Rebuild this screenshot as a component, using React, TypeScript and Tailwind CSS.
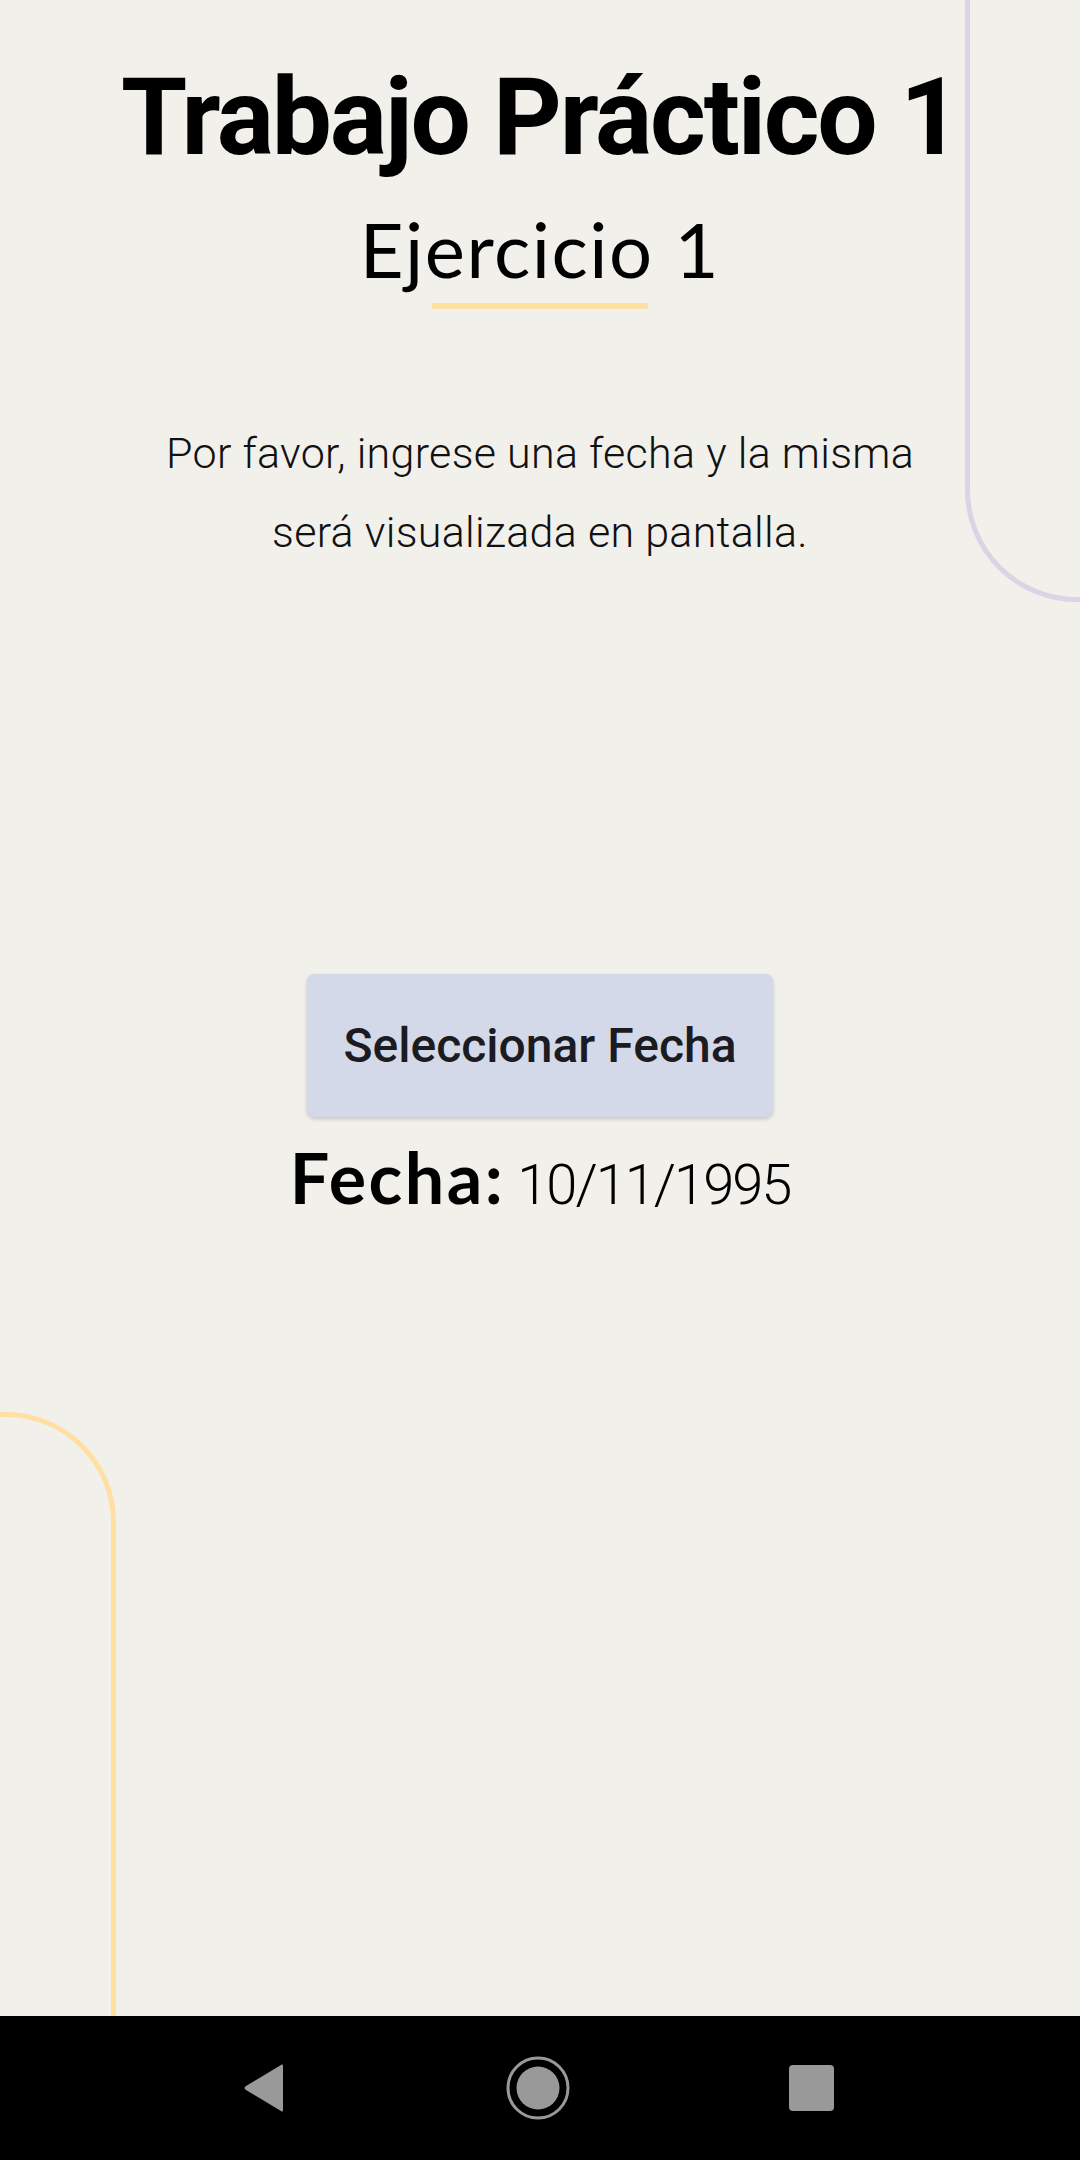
import React from "react";

export default function App() {
  return (
    <div className="w-[1080px] h-[2160px] flex flex-col bg-[#f1f0eb]" style={{ fontFamily: "Roboto, sans-serif" }}>
      <div className="relative flex-1 overflow-hidden flex flex-col items-center">
        {/* decorative outlines */}
        <div className="absolute left-[965px] top-[-20px] w-[300px] h-[622px] border-[5px] border-[#dcd3e4] rounded-bl-[112px]" />
        <div className="absolute left-[-300px] top-[1412px] w-[416px] h-[800px] border-[5px] border-[#ffdfa2] rounded-tr-[110px]" />

        <h1 className="relative mt-[64px] text-[107px] leading-[108px] font-bold text-black tracking-[-2.2px]" style={{ fontFamily: "Roboto, sans-serif" }}>
          Trabajo Práctico 1
        </h1>
        <h2 className="relative mt-[40px] text-[76px] leading-[74px] font-normal text-black tracking-[1.5px]" style={{ fontFamily: "Lato, sans-serif" }}>
          Ejercicio 1
        </h2>
        <div className="relative mt-[17px] w-[216px] h-[6px] bg-[#ffe0a3]" />

        <p className="relative mt-[105px] text-center text-[43px] leading-[79px] font-light text-[#111] tracking-[0.3px]" style={{ fontFamily: "Roboto, sans-serif" }}>
          Por favor, ingrese una fecha y la misma
          <br />
          será visualizada en pantalla.
        </p>

        <button className="relative mt-[402px] w-[466px] h-[143px] rounded-[8px] bg-[#d3d9e8] shadow-[0_2px_4px_rgba(0,0,0,0.18)] flex items-center justify-center text-[48px] font-medium text-[#1c1b1f]" style={{ fontFamily: "Roboto, sans-serif" }}>
          Seleccionar Fecha
        </button>

        <div className="relative mt-[20px] flex items-baseline gap-[12px] text-black">
          <span className="text-[70px] leading-[80px] font-bold tracking-[2.5px]" style={{ fontFamily: "Lato, sans-serif" }}>Fecha:</span>
          <span className="text-[56px] leading-[80px] font-light tracking-[-2px]" style={{ fontFamily: "Roboto, sans-serif" }}>10/11/1995</span>
        </div>
      </div>

      <div className="h-[144px] bg-black flex items-center justify-center">
        <div className="flex items-center">
          <svg width="44" height="52" viewBox="0 0 44 52" className="ml-[-4px]">
            <path d="M39 3 Q41 1 41 5 L41 47 Q41 51 39 49 L4 28 Q1 26 4 24 Z" fill="#999" />
          </svg>
          <svg width="66" height="66" viewBox="0 0 66 66" className="ml-[219px]">
            <circle cx="33" cy="33" r="30" fill="none" stroke="#999" strokeWidth="3" />
            <circle cx="33" cy="33" r="21.5" fill="#999" />
          </svg>
          <div className="ml-[218px] w-[45px] h-[46px] rounded-[4px] bg-[#999]" />
        </div>
      </div>
    </div>
  );
}
